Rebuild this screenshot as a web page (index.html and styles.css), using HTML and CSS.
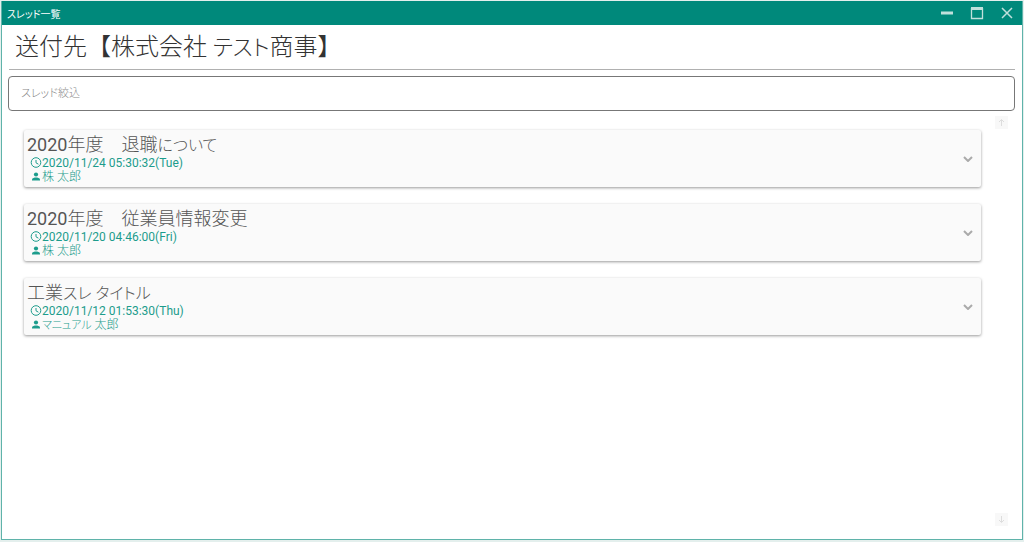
FILE: index.html
```html
<!DOCTYPE html>
<html lang="ja">

<head>
    <meta charset="UTF-8">
    <meta name="viewport" content="width=device-width, initial-scale=1.0">
    <title>スレッド一覧</title>
    <link rel="stylesheet" href="styles.css">
</head>

<body>

    <div class="window">
        <header class="titlebar">
            <span class="caption">スレッド一覧</span>
            <div class="controls">
                <button type="button" aria-label="最小化">
                    <svg width="14" height="14" viewBox="0 0 14 14"><path d="M1 7h12" stroke-width="3" /></svg>
                </button>
                <button type="button" aria-label="最大化">
                    <svg width="14" height="14" viewBox="0 0 14 14"><path d="M1.500 2v10.500h11V2" stroke-width="1.300" /><path d="M1 2.500h12" stroke-width="3" /></svg>
                </button>
                <button type="button" aria-label="閉じる">
                    <svg width="14" height="14" viewBox="0 0 14 14"><path d="M2 2l10 10M12 2L2 12" stroke-width="1.500" /></svg>
                </button>
            </div>
        </header>

        <main>
            <h1>送付先【株式会社 <span class="kana">テスト</span>商事】</h1>

            <input class="filter" type="text" placeholder="スレッド絞込" aria-label="スレッド絞込">

            <div class="content">
                <div class="threads">
                    <article class="thread">
                        <div class="info">
                            <h2><span class="year">2020</span>年度　退職<span class="kana">について</span></h2>
                            <p>
                                <svg width="12" height="12" viewBox="0 0 12 12"><circle cx="6" cy="5.500" r="4.800" /><path d="M6 3v2.800l2.400 1.400" /></svg>
                                <span class="date">2020/11/24 05:30:32(Tue)</span>
                            </p>
                            <p>
                                <svg class="person" width="12" height="12" viewBox="0 0 12 12"><circle cx="6" cy="3.500" r="2.100" /><path d="M2 9.500V8.500c0-1.400 2.600-2 4-2s4 .6 4 2v1z" /></svg>
                                <span>株 太郎</span>
                            </p>
                        </div>
                        <button class="expand" type="button" aria-label="開く">
                            <svg width="10" height="6" viewBox="0 0 10 6"><path d="M1 1l4 4 4-4" /></svg>
                        </button>
                    </article>

                    <article class="thread">
                        <div class="info">
                            <h2><span class="year">2020</span>年度　従業員情報変更</h2>
                            <p>
                                <svg width="12" height="12" viewBox="0 0 12 12"><circle cx="6" cy="5.500" r="4.800" /><path d="M6 3v2.800l2.400 1.400" /></svg>
                                <span class="date">2020/11/20 04:46:00(Fri)</span>
                            </p>
                            <p>
                                <svg class="person" width="12" height="12" viewBox="0 0 12 12"><circle cx="6" cy="3.500" r="2.100" /><path d="M2 9.500V8.500c0-1.400 2.600-2 4-2s4 .6 4 2v1z" /></svg>
                                <span>株 太郎</span>
                            </p>
                        </div>
                        <button class="expand" type="button" aria-label="開く">
                            <svg width="10" height="6" viewBox="0 0 10 6"><path d="M1 1l4 4 4-4" /></svg>
                        </button>
                    </article>

                    <article class="thread">
                        <div class="info">
                            <h2>工業<span class="kana">スレ タイトル</span></h2>
                            <p>
                                <svg width="12" height="12" viewBox="0 0 12 12"><circle cx="6" cy="5.500" r="4.800" /><path d="M6 3v2.800l2.400 1.400" /></svg>
                                <span class="date">2020/11/12 01:53:30(Thu)</span>
                            </p>
                            <p>
                                <svg class="person" width="12" height="12" viewBox="0 0 12 12"><circle cx="6" cy="3.500" r="2.100" /><path d="M2 9.500V8.500c0-1.400 2.600-2 4-2s4 .6 4 2v1z" /></svg>
                                <span><span class="kana">マニュアル</span> 太郎</span>
                            </p>
                        </div>
                        <button class="expand" type="button" aria-label="開く">
                            <svg width="10" height="6" viewBox="0 0 10 6"><path d="M1 1l4 4 4-4" /></svg>
                        </button>
                    </article>
                </div>

                <div class="scroll">
                    <button type="button" aria-label="上へ">
                        <svg width="13" height="13" viewBox="0 0 13 13"><path d="M6.500 10V4M4 6l2.500-2.500L9 6" /></svg>
                    </button>
                    <button type="button" aria-label="下へ">
                        <svg width="13" height="13" viewBox="0 0 13 13"><path d="M6.500 3v6M4 7l2.500 2.500L9 7" /></svg>
                    </button>
                </div>
            </div>
        </main>
    </div>

</body>

</html>
```
FILE: styles.css
```css
* {
    box-sizing: border-box;
}

body {
    margin: 0;
    padding: 1px 1px 2px;
    min-height: 100vh;
    display: flex;
    background: #e4efed;
    font-family: Roboto, "Noto Sans CJK JP", sans-serif;
    font-weight: 300;
}

h1, h2, p {
    margin: 0;
    font-weight: 300;
}

button {
    padding: 0;
    border: none;
    background: none;
    display: flex;
    align-items: center;
    justify-content: center;
}

svg {
    display: block;
    fill: none;
    stroke: currentColor;
}

/* proportional kana */
.kana, .caption, .filter {
    font-feature-settings: "palt";
}

.window {
    flex: 1;
    display: flex;
    flex-direction: column;
    background: white;
    border: 1px solid #5fb3aa;
    border-top: none;
}

.titlebar {
    height: 24px;
    padding: 0 8px 0 5px;
    display: flex;
    align-items: center;
    justify-content: space-between;
    background: #00897b;
    color: white;
}

.caption {
    font-size: 10px;
    font-weight: 400;
}

.controls {
    display: flex;
    gap: 16px;
}

.controls button {
    color: #c0e0dc;
}

main {
    flex: 1;
    padding: 0 7px 0 6px;
    display: flex;
    flex-direction: column;
}

h1 {
    height: 45px;
    margin: 0 0 6px 1px;
    padding-left: 6px;
    border-bottom: 1px solid #b0b0b0;
    font-size: 24px;
    line-height: 44px;
    color: #333;
}

h1 .kana {
    font-size: 22px;
}

.filter {
    width: 100%;
    height: 35px;
    padding: 0 12px;
    border: 1px solid #777;
    border-radius: 4px;
    font-family: inherit;
    font-size: 11px;
    font-weight: 300;
}

.filter::placeholder {
    color: #888;
}

.content {
    flex: 1;
    padding: 5px 7px 13px 16px;
    display: flex;
    gap: 14px;
}

.threads {
    flex: 1;
    padding-top: 14px;
    display: flex;
    flex-direction: column;
    gap: 17px;
}

.thread {
    padding: 4px 8px 3px 3px;
    display: flex;
    align-items: center;
    justify-content: space-between;
    background: #fafafa;
    border-radius: 2px;
    box-shadow: 0 1px 3px rgba(0, 0, 0, .4);
}

h2 {
    height: 22px;
    font-size: 18px;
    line-height: 22px;
    color: #555;
}

h2 .kana {
    font-size: 16px;
}

.year, .date {
    font-weight: 400;
}

.thread p {
    height: 14px;
    padding-left: 3px;
    display: flex;
    align-items: center;
    font-size: 12px;
    line-height: 14px;
    color: #1c9c8c;
}

p .kana {
    font-size: 11px;
}

.person {
    fill: currentColor;
    stroke: none;
}

.expand {
    color: #aaa;
}

.expand svg {
    stroke-width: 2;
}

.scroll {
    display: flex;
    flex-direction: column;
    justify-content: space-between;
}

.scroll button {
    width: 13px;
    height: 13px;
    background: #f8f8f8;
    color: #ddd;
}
```
